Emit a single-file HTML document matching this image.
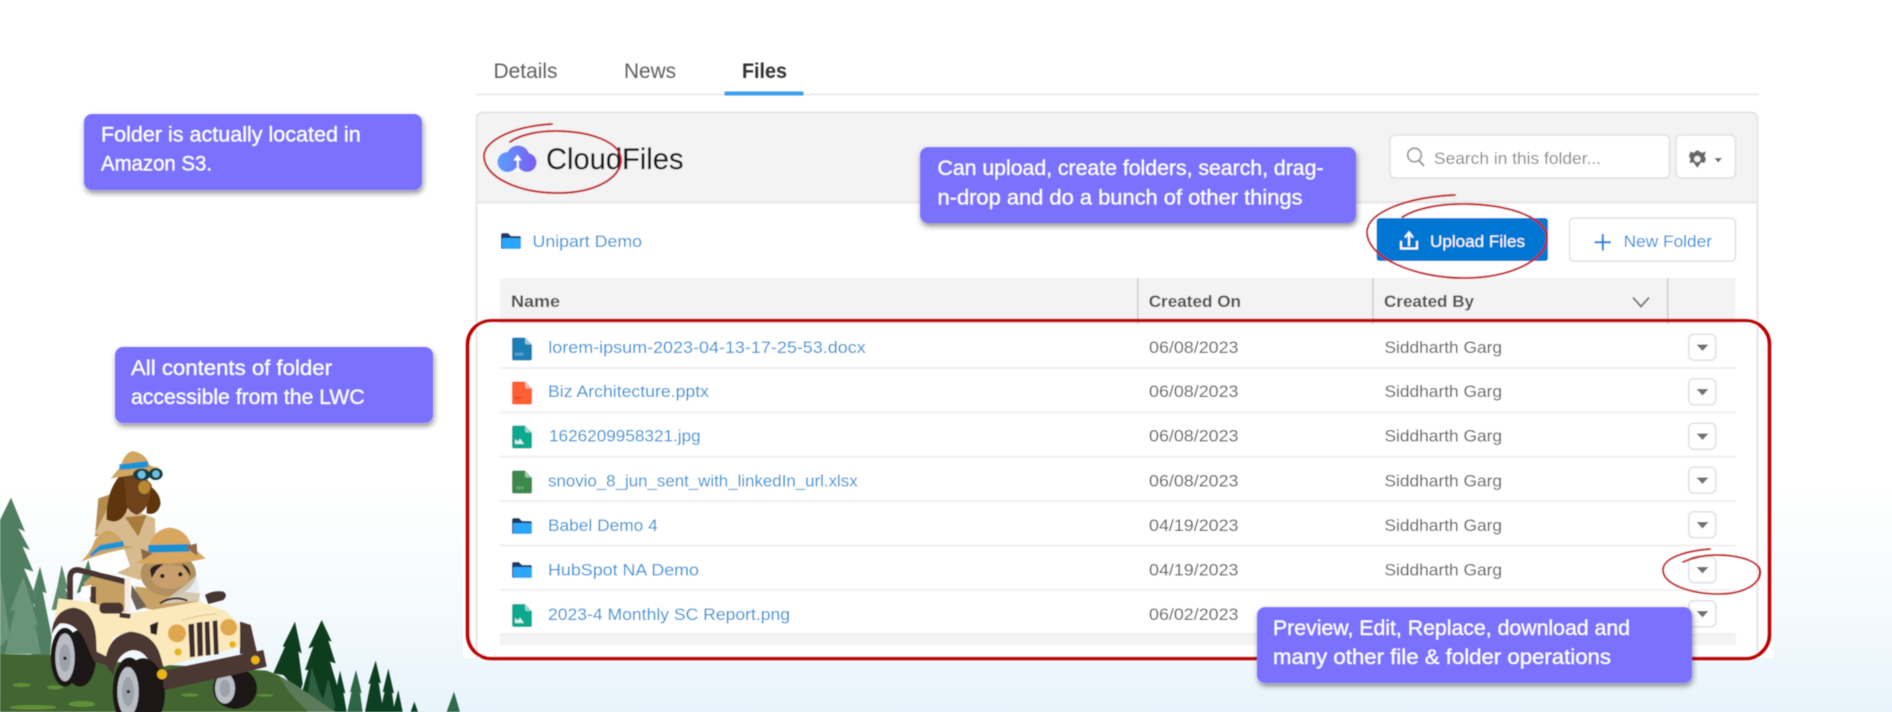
<!DOCTYPE html>
<html lang="en">
<head>
<meta charset="utf-8">
<title>CloudFiles</title>
<style>
html,body{margin:0;padding:0;width:1892px;height:712px;overflow:hidden;background:#fff}
svg{display:block}
text{font-family:"Liberation Sans",sans-serif}
.row{font-size:17px;fill:#2f92d6}
.cell{font-size:17px;fill:#5c5c5c}
.hd{font-size:17px;font-weight:bold;fill:#4f4f4f}
.call{font-size:21px;fill:#fff;stroke:#fff;stroke-width:.2}
.tab{font-size:21px;fill:#606060}
.red{fill:none;stroke:#c3141d;stroke-width:2;stroke-linecap:round}
.btn{fill:#fff;stroke:#e0e0e0;stroke-width:1.5}
.tri{fill:#707070}
.div{stroke:#f0f0f0;stroke-width:2}
</style>
</head>
<body>
<svg width="1892" height="712" viewBox="0 0 1892 712" xmlns="http://www.w3.org/2000/svg">
<defs>
<linearGradient id="bg" x1="0" y1="0" x2="0" y2="1">
<stop offset="0" stop-color="#ffffff"/><stop offset=".68" stop-color="#ffffff"/><stop offset=".85" stop-color="#f5fafd"/><stop offset="1" stop-color="#e8f4fb"/>
</linearGradient>
<linearGradient id="cl" gradientUnits="userSpaceOnUse" x1="497" y1="0" x2="537" y2="0">
<stop offset="0" stop-color="#5aa0fb"/><stop offset="1" stop-color="#7a5cf2"/>
</linearGradient>
<filter id="sh" x="-10%" y="-20%" width="120%" height="150%">
<feDropShadow dx="1" dy="3" stdDeviation="3" flood-color="#000" flood-opacity=".45"/>
</filter>
<filter id="soft" filterUnits="userSpaceOnUse" x="0" y="0" width="1892" height="712"><feGaussianBlur stdDeviation=".45"/></filter>
<g id="doc"><path d="M0 2a2 2 0 0 1 2-2H13L20 7V21a2 2 0 0 1-2 2H2a2 2 0 0 1-2-2Z"/><path d="M13 0L20 7H15a2 2 0 0 1-2-2Z" fill="#fff" opacity=".55"/></g>
<g id="folder"><path d="M0 2a2 2 0 0 1 2-2H7L10 3H18a2 2 0 0 1 2 2V14a2 2 0 0 1-2 2H2a2 2 0 0 1-2-2Z" fill="#1b3b68"/><path d="M2 5H18a2 2 0 0 1 2 2V14a2 2 0 0 1-2 2H3a2 2 0 0 1-2-2V6Z" fill="#2aa6fa"/></g>
<g id="dd"><rect x=".75" y=".75" width="27" height="26" rx="5" class="btn"/><path d="M8.500 11H20.500L14.500 17.500Z" class="tri"/></g>
</defs>

<rect width="1892" height="712" fill="url(#bg)"/>

<!-- Illustration -->
<g filter="url(#soft)">
<g transform="translate(0 430) scale(.33333)">
<path d="M33 203L75 305L55 295L90 360L68 350L100 425L72 415L120 530L100 520L135 672H0V270Z" fill="#4f7f60"/>
<path d="M120 410L140 490L128 485L155 620L150 680H95L105 490L98 490Z" fill="#4f7f60"/>
<path d="M185 405L205 480L195 475L222 535L155 540L172 470Z" fill="#5f8a6c"/>
<path d="M70 440L115 590L105 580L122 672H15L45 540L30 545Z" fill="#6a9478"/>
<path d="M0 430L30 620L0 650Z" fill="#6a9478"/>
<path d="M265 390L285 470L230 490L250 430Z" fill="#4f7f60"/>

<path d="M885 575L905 670L895 665L908 760L900 790L850 735L820 730L855 650L848 650Z" fill="#0c3d1b"/>
<path d="M965 570L995 635L985 632L1007 700L990 695L1035 846H950L905 790L925 720L915 720L940 650L925 655Z" fill="#0c3d1b"/>
<path d="M935 712L960 790L990 846H915Z" fill="#2f5f42"/>
<path d="M985 745L1010 846H960Z" fill="#2f5f42"/>
<path d="M1020 722L1036 790L1030 788L1040 846H1002L1012 790L1006 792Z" fill="#0f4023"/>
<path d="M1068 720L1085 790L1080 788L1088 846H1042L1055 785L1050 787Z" fill="#2f6545"/>
<path d="M1127 692L1143 760L1136 757L1150 846H1095L1112 760L1105 762Z" fill="#0f4023"/>
<path d="M1165 716L1182 790L1176 788L1184 846H1140L1154 785L1148 787Z" fill="#0f4023"/>
<path d="M1195 780L1208 846H1178Z" fill="#0f4023"/>
<path d="M1243 815L1254 846H1232Z" fill="#0f4023"/>
<path d="M1362 785L1380 846H1340Z" fill="#2f6a4a"/>

<path d="M0 672L150 675L330 695L800 722L840 738L905 795L1010 846H0Z" fill="#426530"/>
<path d="M835 736L880 760L1005 846H925L870 790Z" fill="#5a7a58"/>
<ellipse cx="65" cy="765" rx="28" ry="6" fill="#5f9038"/><ellipse cx="165" cy="772" rx="24" ry="6" fill="#5f9038"/>
<ellipse cx="100" cy="832" rx="70" ry="7" fill="#5f9038"/><ellipse cx="245" cy="822" rx="40" ry="9" fill="#5f9038"/>
<ellipse cx="570" cy="795" rx="26" ry="5" fill="#5f9038"/><ellipse cx="795" cy="796" rx="24" ry="4" fill="#5f9038"/>

<!-- dog -->
<path d="M285 320L295 205L340 190L350 300Z" fill="#b38b4e"/>
<path d="M285 310L320 240L400 240L465 265L468 385L420 450L355 430L340 330Z" fill="#d7bb8f"/>
<path d="M375 262L440 255L415 320Z" fill="#a87c3b"/>
<path d="M320 270Q316 180 370 125L400 130L388 210Q380 272 340 275Z" fill="#5f3510"/>
<path d="M440 160Q485 190 481 225Q470 258 440 250Z" fill="#5f3510"/>
<path d="M370 130Q430 128 455 165Q450 240 410 255Q372 240 378 200Z" fill="#70421a"/>
<ellipse cx="433" cy="172" rx="18" ry="20" fill="#b58a32"/>
<path d="M332 145Q350 125 362 108Q375 68 398 63Q435 70 445 98Q450 112 478 112Q420 135 332 145Z" fill="#d2a560"/>
<path d="M358 103L443 93L445 112L360 120Z" fill="#1b93d1"/>
<ellipse cx="425" cy="134" rx="26" ry="18" fill="#153e3e"/><ellipse cx="467" cy="132" rx="21" ry="18" fill="#153e3e"/>
<circle cx="425" cy="134" r="12" fill="#6fc0e0"/><circle cx="468" cy="132" r="11" fill="#6fc0e0"/>

<!-- goat -->
<path d="M250 460L290 425L378 450L378 545L300 545L272 515Z" fill="#c6a063"/>
<path d="M276 375Q300 350 372 355L390 408Q350 436 300 428Q272 412 276 375Z" fill="#fff"/>
<path d="M245 470L275 465L272 500L250 510L240 495Z" fill="#fff"/>
<path d="M243 395Q272 368 285 330Q310 295 335 305Q365 320 372 345L405 352Q310 368 243 395Z" fill="#cfa564"/>
<path d="M270 372L300 345L370 333L372 350L300 362L272 380Z" fill="#1b93d1"/>

<!-- wheels back -->
<ellipse cx="240" cy="685" rx="48" ry="85" fill="#1c1815"/>
<ellipse cx="195" cy="682" rx="43" ry="88" fill="#1c1815"/>
<ellipse cx="195" cy="682" rx="29" ry="72" fill="#b9bdc5"/><ellipse cx="195" cy="684" rx="17" ry="42" fill="#9da1a9"/><circle cx="195" cy="685" r="5" fill="#222"/>
<ellipse cx="705" cy="775" rx="66" ry="62" fill="#1c1815"/>
<ellipse cx="675" cy="775" rx="30" ry="46" fill="#b9bdc5"/><ellipse cx="675" cy="775" rx="16" ry="26" fill="#9da1a9"/>

<!-- roll bar -->
<path d="M210 510V442Q212 418 236 420L375 455" fill="none" stroke="#463632" stroke-width="17"/>
<path d="M280 470L280 540" stroke="#463632" stroke-width="16" fill="none"/>

<!-- astro -->
<path d="M405 470L600 490L595 515L460 540L415 530Z" fill="#c8a165"/>
<ellipse cx="505" cy="432" rx="83" ry="66" fill="#b3905f"/>
<ellipse cx="510" cy="440" rx="58" ry="36" fill="#c9a06c"/>
<path d="M450 420Q458 402 490 402L470 420L455 445Z" fill="#2b2320"/><path d="M545 402Q570 405 572 440L558 420Z" fill="#2b2320"/>
<circle cx="487" cy="438" r="6.5" fill="#1d1d1d"/><circle cx="541" cy="433" r="6.5" fill="#1d1d1d"/>
<path d="M420 400Q395 402 425 390L445 352Q462 296 510 293Q560 298 575 350L617 385Q540 405 420 400Z" fill="#d7a75e"/>
<path d="M445 345L570 342L568 365L445 368Z" fill="#1b8fd0"/>
<path d="M422 356L458 370L428 390Z" fill="#8c6a48"/><path d="M555 350L590 340L592 378Z" fill="#8c6a48"/>
<path d="M395 465L440 530L410 540L393 500Z" fill="#6d6459"/>

<!-- windshield and pole -->
<path d="M550 470L590 435L602 512L480 522Z" fill="#dfe4e6" opacity=".6"/>
<path d="M374 443H390V550H374Z" fill="#fbeae2"/>
<path d="M480 520Q520 495 562 512" fill="none" stroke="#2a2320" stroke-width="6"/>
<path d="M615 495Q640 480 670 485Q685 495 670 510L632 520L625 522Z" fill="#463632"/>

<!-- body -->
<path d="M175 505L275 518L385 552L600 515L680 545L722 590L722 650L490 710L470 650L400 610L340 620L320 680L290 665L285 610L230 560L160 590Z" fill="#fbe8bb"/>
<rect x="298" y="518" width="72" height="33" rx="14" fill="#463632"/>
<path d="M360 548L392 552L390 566L358 562Z" fill="#463632"/>
<path d="M155 612Q160 540 220 533Q280 540 288 620L290 665L320 680L315 705L282 695L250 622Q220 575 180 580Q165 590 155 612Z" fill="#4b3833"/>
<path d="M315 702Q320 620 390 605Q462 610 482 680L492 716L460 722Q440 660 400 660Q350 665 340 735Z" fill="#4b3833"/>
<path d="M720 575L752 585L772 672L720 672Z" fill="#4b3833"/>
<path d="M450 585L475 575L470 615L452 610Z" fill="#2c2422"/>
<path d="M545 572Q590 555 650 552" fill="none" stroke="#cbb78c" stroke-width="2"/>
<circle cx="531" cy="610" r="27" fill="#dfa850"/><circle cx="686" cy="592" r="25" fill="#dfa850"/>
<circle cx="534" cy="666" r="11" fill="#eab415"/><circle cx="698" cy="643" r="10" fill="#eab415"/>
<path d="M565 583L582 581L585 680L570 682Z M590 578L607 576L609 677L593 679Z M614 576L628 574L632 675L617 676Z M638 573L652 571L656 672L642 674Z" fill="#3d2f2d"/>
<!-- front wheel -->
<ellipse cx="430" cy="790" rx="65" ry="105" fill="#1c1815"/>
<ellipse cx="388" cy="785" rx="50" ry="102" fill="#1c1815"/>
<ellipse cx="384" cy="785" rx="32" ry="74" fill="#b9bdc5"/><ellipse cx="384" cy="785" rx="18" ry="44" fill="#9da1a9"/><circle cx="385" cy="785" r="5" fill="#222"/>
<path d="M490 722L790 660L800 710L700 735L495 780L490 770Z" fill="#4b3833"/>
<circle cx="766" cy="690" r="13" fill="#eab415"/><circle cx="486" cy="733" r="15" fill="#eab415"/>
</g>
</g>

<!-- Main white screenshot -->
<rect x="463" y="0" width="1311" height="658" fill="#fff"/>

<g filter="url(#soft)">
<!-- Tabs -->
<text x="493.5" y="78" class="tab" textLength="64" lengthAdjust="spacingAndGlyphs">Details</text>
<text x="624" y="78" class="tab" textLength="52" lengthAdjust="spacingAndGlyphs">News</text>
<text x="742" y="78" class="tab" style="font-weight:bold;fill:#333" textLength="45" lengthAdjust="spacingAndGlyphs">Files</text>
<rect x="476" y="93.5" width="1282" height="2" fill="#ececec"/>
<rect x="724.5" y="91.5" width="79" height="4" fill="#3d9ef0"/>

<!-- Panel -->
<path d="M476.5 658V118.5a6 6 0 0 1 6-6H1751.5a6 6 0 0 1 6 6V658" fill="#fff" stroke="#dedede" stroke-width="1.5"/>
<path d="M477.5 201V119a6 6 0 0 1 6-6H1751a6 6 0 0 1 6 6V201Z" fill="#f3f3f3"/>
<rect x="477" y="201" width="1280" height="2.5" fill="#e8e8e8"/>

<!-- Logo -->
<g fill="url(#cl)">
<circle cx="518" cy="157" r="11.5"/>
<circle cx="507.500" cy="162" r="10"/>
<circle cx="527" cy="162.500" r="9.500"/>
<rect x="509" y="158" width="18" height="9"/>
</g>
<path d="M516.800 172V160.500H513.500L517.500 154.500L521.500 160.500H518.800V172Z" fill="#fff"/>
<text x="546" y="169" style="font-size:30px;fill:#151515;stroke:#151515;stroke-width:.2" textLength="137.500" lengthAdjust="spacingAndGlyphs">CloudFiles</text>

<!-- Search -->
<rect x="1390" y="135" width="279.500" height="43" rx="5" class="btn"/>
<circle cx="1414.500" cy="155" r="6.800" fill="none" stroke="#8c8c8c" stroke-width="1.600"/>
<path d="M1419 160.500L1424 166" stroke="#8c8c8c" stroke-width="1.800" fill="none"/>
<text x="1434" y="164" style="font-size:17px;fill:#8a8a8a" textLength="167" lengthAdjust="spacingAndGlyphs">Search in this folder...</text>
<rect x="1676" y="135" width="59.500" height="43" rx="5" class="btn"/>
<path d="M1697.300 150L1702 152.700L1706 151.500L1704.500 156L1706 159L1704.500 163L1701 162.500L1697.300 168L1693.500 162.500L1689.500 163L1690.500 159L1688.800 156L1690.500 151.500L1693.500 152.700Z" fill="#666"/>
<circle cx="1697.300" cy="159" r="3.200" fill="#f3f3f3"/>
<path d="M1714.500 158H1722L1718.200 162.500Z" fill="#666"/>

<!-- Breadcrumb -->
<use href="#folder" x="501" y="233"/>
<text x="532.500" y="247" class="row" textLength="109.500" lengthAdjust="spacingAndGlyphs">Unipart Demo</text>

<!-- Buttons -->
<rect x="1376.600" y="218" width="171.400" height="43" rx="3" fill="#0176d3"/>
<path d="M1409 246V234M1405 237.500L1409 232.500L1413 237.500" fill="none" stroke="#fff" stroke-width="2"/>
<path d="M1401 241V248.500H1417V241" fill="none" stroke="#fff" stroke-width="2"/>
<text x="1430" y="247" style="font-size:17px;fill:#fff" textLength="95" lengthAdjust="spacingAndGlyphs">Upload Files</text>
<rect x="1569.600" y="218" width="165.800" height="43" rx="4" class="btn"/>
<path d="M1594.500 242.300H1611M1602.800 234V250.600" stroke="#0f80d4" stroke-width="2" fill="none"/>
<text x="1623.700" y="247" style="font-size:17px;fill:#2690dd" textLength="88.300" lengthAdjust="spacingAndGlyphs">New Folder</text>

<!-- Table header -->
<rect x="500" y="278" width="1235.500" height="46" fill="#f3f3f3"/>
<path d="M1137.800 278V324M1373 278V324M1667.700 278V324" stroke="#cfcfcf" stroke-width="1.500"/>
<text x="511" y="307" class="hd" textLength="49" lengthAdjust="spacingAndGlyphs">Name</text>
<text x="1148.700" y="307" class="hd" textLength="92.300" lengthAdjust="spacingAndGlyphs">Created On</text>
<text x="1384" y="307" class="hd" textLength="90" lengthAdjust="spacingAndGlyphs">Created By</text>
<path d="M1633 297.500L1641 306.500L1649 297.500" fill="none" stroke="#707070" stroke-width="1.800"/>

<!-- Rows -->
<path d="M500 368H1736M500 412.500H1736M500 456.500H1736M500 501H1736M500 545.500H1736M500 590H1736M500 634H1736" class="div"/>
<rect x="500" y="635" width="1236" height="10" fill="#f3f3f3"/>

<g fill="#1e7fb5"><use href="#doc" x="512" y="337.500"/></g>
<text x="515" y="355.500" style="font-size:4px;fill:#bfe0f2">DOC</text>
<text x="548.300" y="353" class="row" textLength="317.400" lengthAdjust="spacingAndGlyphs">lorem-ipsum-2023-04-13-17-25-53.docx</text>
<text x="1149" y="353" class="cell" textLength="89.500" lengthAdjust="spacingAndGlyphs">06/08/2023</text>
<text x="1384.500" y="353" class="cell" textLength="117.500" lengthAdjust="spacingAndGlyphs">Siddharth Garg</text>
<use href="#dd" x="1688" y="333.500"/>

<g fill="#ff5f31"><use href="#doc" x="512" y="381.500"/></g>
<text x="515" y="399.500" style="font-size:4px;fill:#a8251c">PPT</text>
<text x="548" y="397" class="row" textLength="161" lengthAdjust="spacingAndGlyphs">Biz Architecture.pptx</text>
<text x="1149" y="397" class="cell" textLength="89.500" lengthAdjust="spacingAndGlyphs">06/08/2023</text>
<text x="1384.500" y="397" class="cell" textLength="117.500" lengthAdjust="spacingAndGlyphs">Siddharth Garg</text>
<use href="#dd" x="1688" y="378"/>

<g fill="#10a98f"><use href="#doc" x="512" y="425.500"/></g>
<path d="M515 444V439L518 441.500L520 438.500L524 444Z" fill="#d5f3ec"/>
<text x="549" y="441.700" class="row" textLength="151.700" lengthAdjust="spacingAndGlyphs">1626209958321.jpg</text>
<text x="1149" y="441.700" class="cell" textLength="89.500" lengthAdjust="spacingAndGlyphs">06/08/2023</text>
<text x="1384.500" y="441.700" class="cell" textLength="117.500" lengthAdjust="spacingAndGlyphs">Siddharth Garg</text>
<use href="#dd" x="1688" y="422.500"/>

<g fill="#3a8a4b"><use href="#doc" x="512" y="470.500"/></g>
<text x="516" y="489" style="font-size:4px;fill:#b8dcc0">XLS</text>
<text x="548" y="486.700" class="row" textLength="309.700" lengthAdjust="spacingAndGlyphs">snovio_8_jun_sent_with_linkedIn_url.xlsx</text>
<text x="1149" y="486.700" class="cell" textLength="89.500" lengthAdjust="spacingAndGlyphs">06/08/2023</text>
<text x="1384.500" y="486.700" class="cell" textLength="117.500" lengthAdjust="spacingAndGlyphs">Siddharth Garg</text>
<use href="#dd" x="1688" y="466.500"/>

<use href="#folder" x="512" y="518"/>
<text x="548" y="531" class="row" textLength="109.700" lengthAdjust="spacingAndGlyphs">Babel Demo 4</text>
<text x="1149" y="531" class="cell" textLength="89.500" lengthAdjust="spacingAndGlyphs">04/19/2023</text>
<text x="1384.500" y="531" class="cell" textLength="117.500" lengthAdjust="spacingAndGlyphs">Siddharth Garg</text>
<use href="#dd" x="1688" y="511"/>

<use href="#folder" x="512" y="562"/>
<text x="548" y="575.500" class="row" textLength="151" lengthAdjust="spacingAndGlyphs">HubSpot NA Demo</text>
<text x="1149" y="575.500" class="cell" textLength="89.500" lengthAdjust="spacingAndGlyphs">04/19/2023</text>
<text x="1384.500" y="575.500" class="cell" textLength="117.500" lengthAdjust="spacingAndGlyphs">Siddharth Garg</text>
<use href="#dd" x="1688" y="556"/>

<g fill="#10a98f"><use href="#doc" x="512" y="604"/></g>
<path d="M515 623V618L518 620.500L520 617.500L524 623Z" fill="#d5f3ec"/>
<text x="548" y="620" class="row" textLength="242" lengthAdjust="spacingAndGlyphs">2023-4 Monthly SC Report.png</text>
<text x="1149" y="620" class="cell" textLength="89.500" lengthAdjust="spacingAndGlyphs">06/02/2023</text>
<use href="#dd" x="1688" y="600"/>

<!-- Red annotations -->
<rect x="467.500" y="320.500" width="1302" height="338" rx="24" fill="none" stroke="#bd0000" stroke-width="3.500"/>
<path class="red" d="M552 124C515 126 484 140 484 156C484 178 520 193 558 193C595 193 621 178 621 160C621 142 590 131 555 131C535 131 518 136 510 142"/>
<path class="red" d="M1455 195C1408 197 1367 212 1367 232C1367 258 1415 278 1464 278C1510 278 1547 260 1547 238C1547 218 1510 204 1462 204C1437 204 1415 209 1402.500 217"/>
<path class="red" d="M1710 549C1685 551 1663 558 1663 570C1663 584 1690 594 1719 594C1742 594 1760 585 1760 572C1760 562 1742 555 1715 555C1703 555 1692 558 1683 562"/>

<!-- Callouts -->
<g filter="url(#sh)" fill="#7a71ff">
<rect x="84" y="114" width="338" height="76" rx="8"/>
<rect x="115" y="347" width="318" height="76" rx="8"/>
<rect x="920" y="147" width="436" height="76" rx="8"/>
<rect x="1257" y="607" width="435" height="76" rx="8"/>
</g>
<text x="101" y="141.700" class="call" textLength="259.700" lengthAdjust="spacingAndGlyphs">Folder is actually located in</text>
<text x="101" y="170.700" class="call" textLength="111" lengthAdjust="spacingAndGlyphs">Amazon S3.</text>
<text x="131" y="375" class="call" textLength="201" lengthAdjust="spacingAndGlyphs">All contents of folder</text>
<text x="131" y="404" class="call" textLength="233.700" lengthAdjust="spacingAndGlyphs">accessible from the LWC</text>
<text x="937.500" y="175" class="call" textLength="386" lengthAdjust="spacingAndGlyphs">Can upload, create folders, search, drag-</text>
<text x="937.500" y="204.300" class="call" textLength="365" lengthAdjust="spacingAndGlyphs">n-drop and do a bunch of other things</text>
<text x="1273" y="635" class="call" textLength="357" lengthAdjust="spacingAndGlyphs">Preview, Edit, Replace, download and</text>
<text x="1273" y="664" class="call" textLength="338" lengthAdjust="spacingAndGlyphs">many other file &amp; folder operations</text>
</g>
</svg>
</body>
</html>
